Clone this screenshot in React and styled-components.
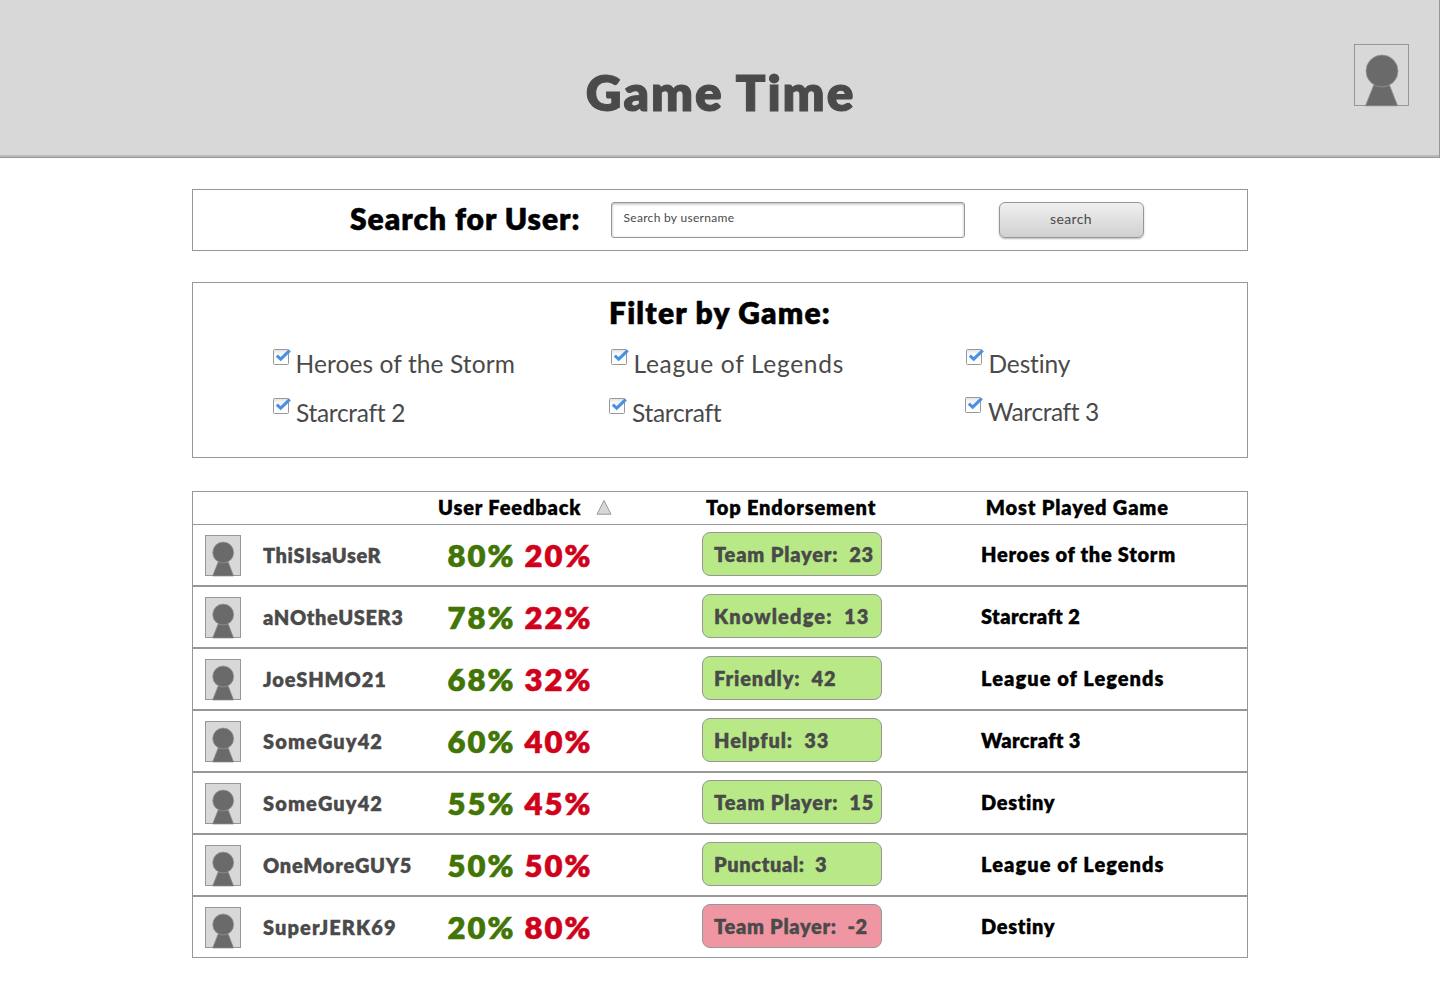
import React from 'react';
import styled, { createGlobalStyle } from 'styled-components';

const GlobalStyle = createGlobalStyle`
  *, *::before, *::after { box-sizing: border-box; }
  body {
    margin: 0;
    background: #fff;
    color: #4a4a4a;
    font-family: Lato, "Liberation Sans", sans-serif;
  }
`;

const Header = styled.header`
  display: grid;
  grid-template-columns: 1fr auto 1fr;
  align-items: start;
  height: 158px;
  padding-right: 30px;
  background: #d8d8d8;
  border-right: 1px solid #979797;
  border-bottom: 1px solid #979797;
  box-shadow: inset 0 -2px 0 #bababa;
`;

const Title = styled.h1`
  grid-column: 2;
  margin: 62px 0 0 32px;
  font-size: 49.5px;
  font-weight: 800;
  line-height: 60px;
  letter-spacing: 1.95px;
  -webkit-text-stroke: 1px currentColor;
`;

const HeaderUser = styled.div`
  justify-self: end;
  margin-top: 44px;
`;

const AvatarFrame = styled.svg`
  display: block;
  flex: none;
  width: ${(p) => (p.$large ? 55 : 36)}px;
  height: ${(p) => (p.$large ? 62 : 41)}px;
  overflow: visible;
`;

const Main = styled.main`
  width: 1056px;
  margin: 31px auto 0;
`;

const Panel = styled.section`
  border: 1px solid #979797;
`;

const SearchPanel = styled(Panel)`
  display: flex;
  align-items: center;
  height: 62px;
  padding-left: 157px;
`;

const SearchLabel = styled.label`
  width: 261px;
  padding-bottom: 4px;
  color: #000;
  font-size: 30px;
  font-weight: 800;
  letter-spacing: 0.98px;
  -webkit-text-stroke: 0.5px currentColor;
`;

const SearchField = styled.div`
  display: flex;
  align-items: center;
  width: 354px;
  height: 36px;
  padding: 0 0 6px 11.5px;
  border: 1px solid #979797;
  border-radius: 3px;
  box-shadow: inset 0 1px 3px rgba(0, 0, 0, 0.3);
  font-size: 12px;
  letter-spacing: 0.3px;
`;

const SearchButton = styled.button`
  width: 145px;
  height: 36px;
  margin-left: 34px;
  padding: 0 1px 3px 0;
  border: 1px solid #979797;
  border-radius: 6px;
  background: linear-gradient(#f0f0f0, #d0d0d0);
  box-shadow: 0 1px 2px rgba(0, 0, 0, 0.28);
  color: #4a4a4a;
  font-family: inherit;
  font-size: 14px;
  letter-spacing: 0.4px;
`;

const FilterPanel = styled(Panel)`
  height: 176px;
  margin-top: 31px;
`;

const FilterTitle = styled.h2`
  margin: 11px 0 0;
  color: #000;
  font-size: 30px;
  font-weight: 800;
  line-height: 36px;
  letter-spacing: 1.2px;
  text-align: center;
  -webkit-text-stroke: 0.5px currentColor;
`;

const FilterGrid = styled.div`
  display: grid;
  grid-template-columns: 336px 357px 1fr;
  margin-top: 19px;
  padding-left: 80px;
`;

const FilterColumn = styled.div`
  display: grid;
  grid-auto-rows: ${(p) => p.$step}px;
`;

const FilterItem = styled.label`
  display: flex;
  align-items: flex-start;
  gap: ${(p) => p.$gap}px;
  margin-left: ${(p) => p.$indent || 0}px;
  font-size: 24.5px;
  line-height: 29px;
  letter-spacing: ${(p) => p.$track}px;
  white-space: nowrap;
`;

const CheckIcon = styled.svg`
  display: block;
  flex: none;
  width: 16px;
  height: 16px;
  overflow: visible;
`;

const Table = styled.section`
  margin-top: 33px;
`;

const columns = '58px 184.5px 254.5px 279px 1fr';

const TableHead = styled.div`
  display: grid;
  grid-template-columns: ${columns};
  align-items: center;
  height: 33px;
  padding-left: 12px;
  border: solid #979797;
  border-width: 1px 1px 0;
`;

const HeadCell = styled.div`
  display: flex;
  align-items: center;
  grid-column: ${(p) => p.$column};
  margin-left: ${(p) => p.$shift}px;
  padding-bottom: 2px;
  color: #000;
  font-size: 20px;
  font-weight: 800;
  line-height: 24px;
  letter-spacing: 0.85px;
  white-space: nowrap;
  -webkit-text-stroke: 0.3px currentColor;
`;

const SortIcon = styled.svg`
  display: block;
  width: 16px;
  height: 16px;
  margin-left: 14.5px;
`;

const Row = styled.div`
  display: grid;
  grid-template-columns: ${columns};
  align-items: center;
  height: 62px;
  padding-left: 12px;
  border: 1px solid #979797;
  font-size: 20px;
  font-weight: 800;
  line-height: 24px;
  white-space: nowrap;
  -webkit-text-stroke: 0.3px currentColor;
`;

const UserName = styled.div`
  letter-spacing: ${(p) => p.$track}px;
`;

const Feedback = styled.div`
  display: grid;
  grid-template-columns: 77px 1fr;
  padding-bottom: 1px;
  font-size: 31px;
  line-height: 36px;
  letter-spacing: 2px;
  -webkit-text-stroke: 0.6px currentColor;
`;

const Positive = styled.span`
  color: #417505;
`;

const Negative = styled.span`
  color: #d0021b;
`;

const Endorsement = styled.div`
  display: flex;
  align-items: center;
  width: 180px;
  height: 44px;
  margin: 0 0 2px;
  padding: 0 0 1px 11px;
  border: 1px solid #979797;
  border-radius: 8px;
  background: ${(p) => (p.$negative ? '#ef96a2' : '#b8e986')};
  letter-spacing: ${(p) => p.$track - 0.06}px;
  white-space: pre;
`;

const Game = styled.div`
  padding-bottom: 3px;
  color: #000;
  letter-spacing: ${(p) => p.$track - 0.05}px;
`;

function Avatar({ large }) {
  return large ? (
    <AvatarFrame $large viewBox="0 0 55 62">
      <rect x="0.5" y="0.5" width="54" height="61" fill="#d8d8d8" stroke="#979797" />
      <path d="M20 40.5H35.2L43.6 61.8H11.5Z" fill="#6a6a6a" stroke="#8b8b8b" strokeWidth="0.8" />
      <circle cx="28" cy="27" r="16" fill="#6a6a6a" stroke="#979797" strokeWidth="0.8" />
    </AvatarFrame>
  ) : (
    <AvatarFrame viewBox="0 0 36 41">
      <rect x="0.5" y="0.5" width="35" height="40" fill="#d8d8d8" stroke="#979797" />
      <path d="M13.2 27H23.2L28.6 41H7.6Z" fill="#6a6a6a" stroke="#8b8b8b" strokeWidth="0.7" />
      <circle cx="18.2" cy="17.5" r="10.5" fill="#6a6a6a" stroke="#979797" strokeWidth="0.7" />
    </AvatarFrame>
  );
}

function Check() {
  return (
    <CheckIcon viewBox="0 0 16 16">
      <defs>
        <linearGradient id="boxShade" x1="0" y1="0" x2="0" y2="1">
          <stop offset="0" stopColor="#e2e2e2" />
          <stop offset="0.3" stopColor="#fafafa" />
          <stop offset="1" stopColor="#fff" />
        </linearGradient>
      </defs>
      <rect x="0.5" y="0.5" width="15" height="15" rx="1" fill="url(#boxShade)" stroke="#979797" />
      <path d="M3.8 6.7L7.7 10.2L16.8 1.4" fill="none" stroke="#4a90e2" strokeWidth="3" />
    </CheckIcon>
  );
}

const filters = [
  {
    step: 49,
    items: [
      { name: 'Heroes of the Storm', track: 0.1, gap: 6.5 },
      { name: 'Starcraft 2', track: -0.3, gap: 7 },
    ],
  },
  {
    step: 49,
    items: [
      { name: 'League of Legends', track: 0.7, gap: 6.5, indent: 2 },
      { name: 'Starcraft', track: -0.3, gap: 7 },
    ],
  },
  {
    step: 48,
    items: [
      { name: 'Destiny', track: -0.13, gap: 6.5 },
      { name: 'Warcraft 3', track: -0.4, gap: 7, indent: -1 },
    ],
  },
];

const users = [
  { name: 'ThiSIsaUseR', track: 0.59, up: 80, down: 20, skill: 'Team Player:  23', skillTrack: 0.87, game: 'Heroes of the Storm', gameTrack: 0.77 },
  { name: 'aNOtheUSER3', track: 0.62, up: 78, down: 22, skill: 'Knowledge:  13', skillTrack: 1.18, game: 'Starcraft 2', gameTrack: 0.46 },
  { name: 'JoeSHMO21', track: 0.85, up: 68, down: 32, skill: 'Friendly:  42', skillTrack: 0.95, game: 'League of Legends', gameTrack: 1.1 },
  { name: 'SomeGuy42', track: 1.1, up: 60, down: 40, skill: 'Helpful:  33', skillTrack: 0.98, game: 'Warcraft 3', gameTrack: 0.38 },
  { name: 'SomeGuy42', track: 1.1, up: 55, down: 45, skill: 'Team Player:  15', skillTrack: 0.88, game: 'Destiny', gameTrack: 0.71 },
  { name: 'OneMoreGUY5', track: 0.72, up: 50, down: 50, skill: 'Punctual:  3', skillTrack: 0.66, game: 'League of Legends', gameTrack: 1.1 },
  { name: 'SuperJERK69', track: 1.1, up: 20, down: 80, skill: 'Team Player:  -2', skillTrack: 0.74, negative: true, game: 'Destiny', gameTrack: 0.71 },
];

export default function App() {
  return (
    <>
      <GlobalStyle />
      <Header>
        <Title>Game Time</Title>
        <HeaderUser>
          <Avatar large />
        </HeaderUser>
      </Header>
      <Main>
        <SearchPanel>
          <SearchLabel>Search for User:</SearchLabel>
          <SearchField>Search by username</SearchField>
          <SearchButton>search</SearchButton>
        </SearchPanel>
        <FilterPanel>
          <FilterTitle>Filter by Game:</FilterTitle>
          <FilterGrid>
            {filters.map((column, i) => (
              <FilterColumn key={i} $step={column.step}>
                {column.items.map((item) => (
                  <FilterItem key={item.name} $track={item.track} $gap={item.gap} $indent={item.indent}>
                    <Check />
                    <span>{item.name}</span>
                  </FilterItem>
                ))}
              </FilterColumn>
            ))}
          </FilterGrid>
        </FilterPanel>
        <Table>
          <TableHead>
            <HeadCell $column={3} $shift={-9.5}>
              User Feedback
              <SortIcon viewBox="0 0 16 16">
                <path d="M8 1.5L15 15.2H1Z" fill="#d8d8d8" stroke="#979797" />
              </SortIcon>
            </HeadCell>
            <HeadCell $column={4} $shift={4}>Top Endorsement</HeadCell>
            <HeadCell $column={5} $shift={4.7}>Most Played Game</HeadCell>
          </TableHead>
          {users.map((user, i) => (
            <Row key={i}>
              <Avatar />
              <UserName $track={user.track}>{user.name}</UserName>
              <Feedback>
                <Positive>{user.up}%</Positive>
                <Negative>{user.down}%</Negative>
              </Feedback>
              <Endorsement $track={user.skillTrack} $negative={user.negative}>{user.skill}</Endorsement>
              <Game $track={user.gameTrack}>{user.game}</Game>
            </Row>
          ))}
        </Table>
      </Main>
    </>
  );
}
